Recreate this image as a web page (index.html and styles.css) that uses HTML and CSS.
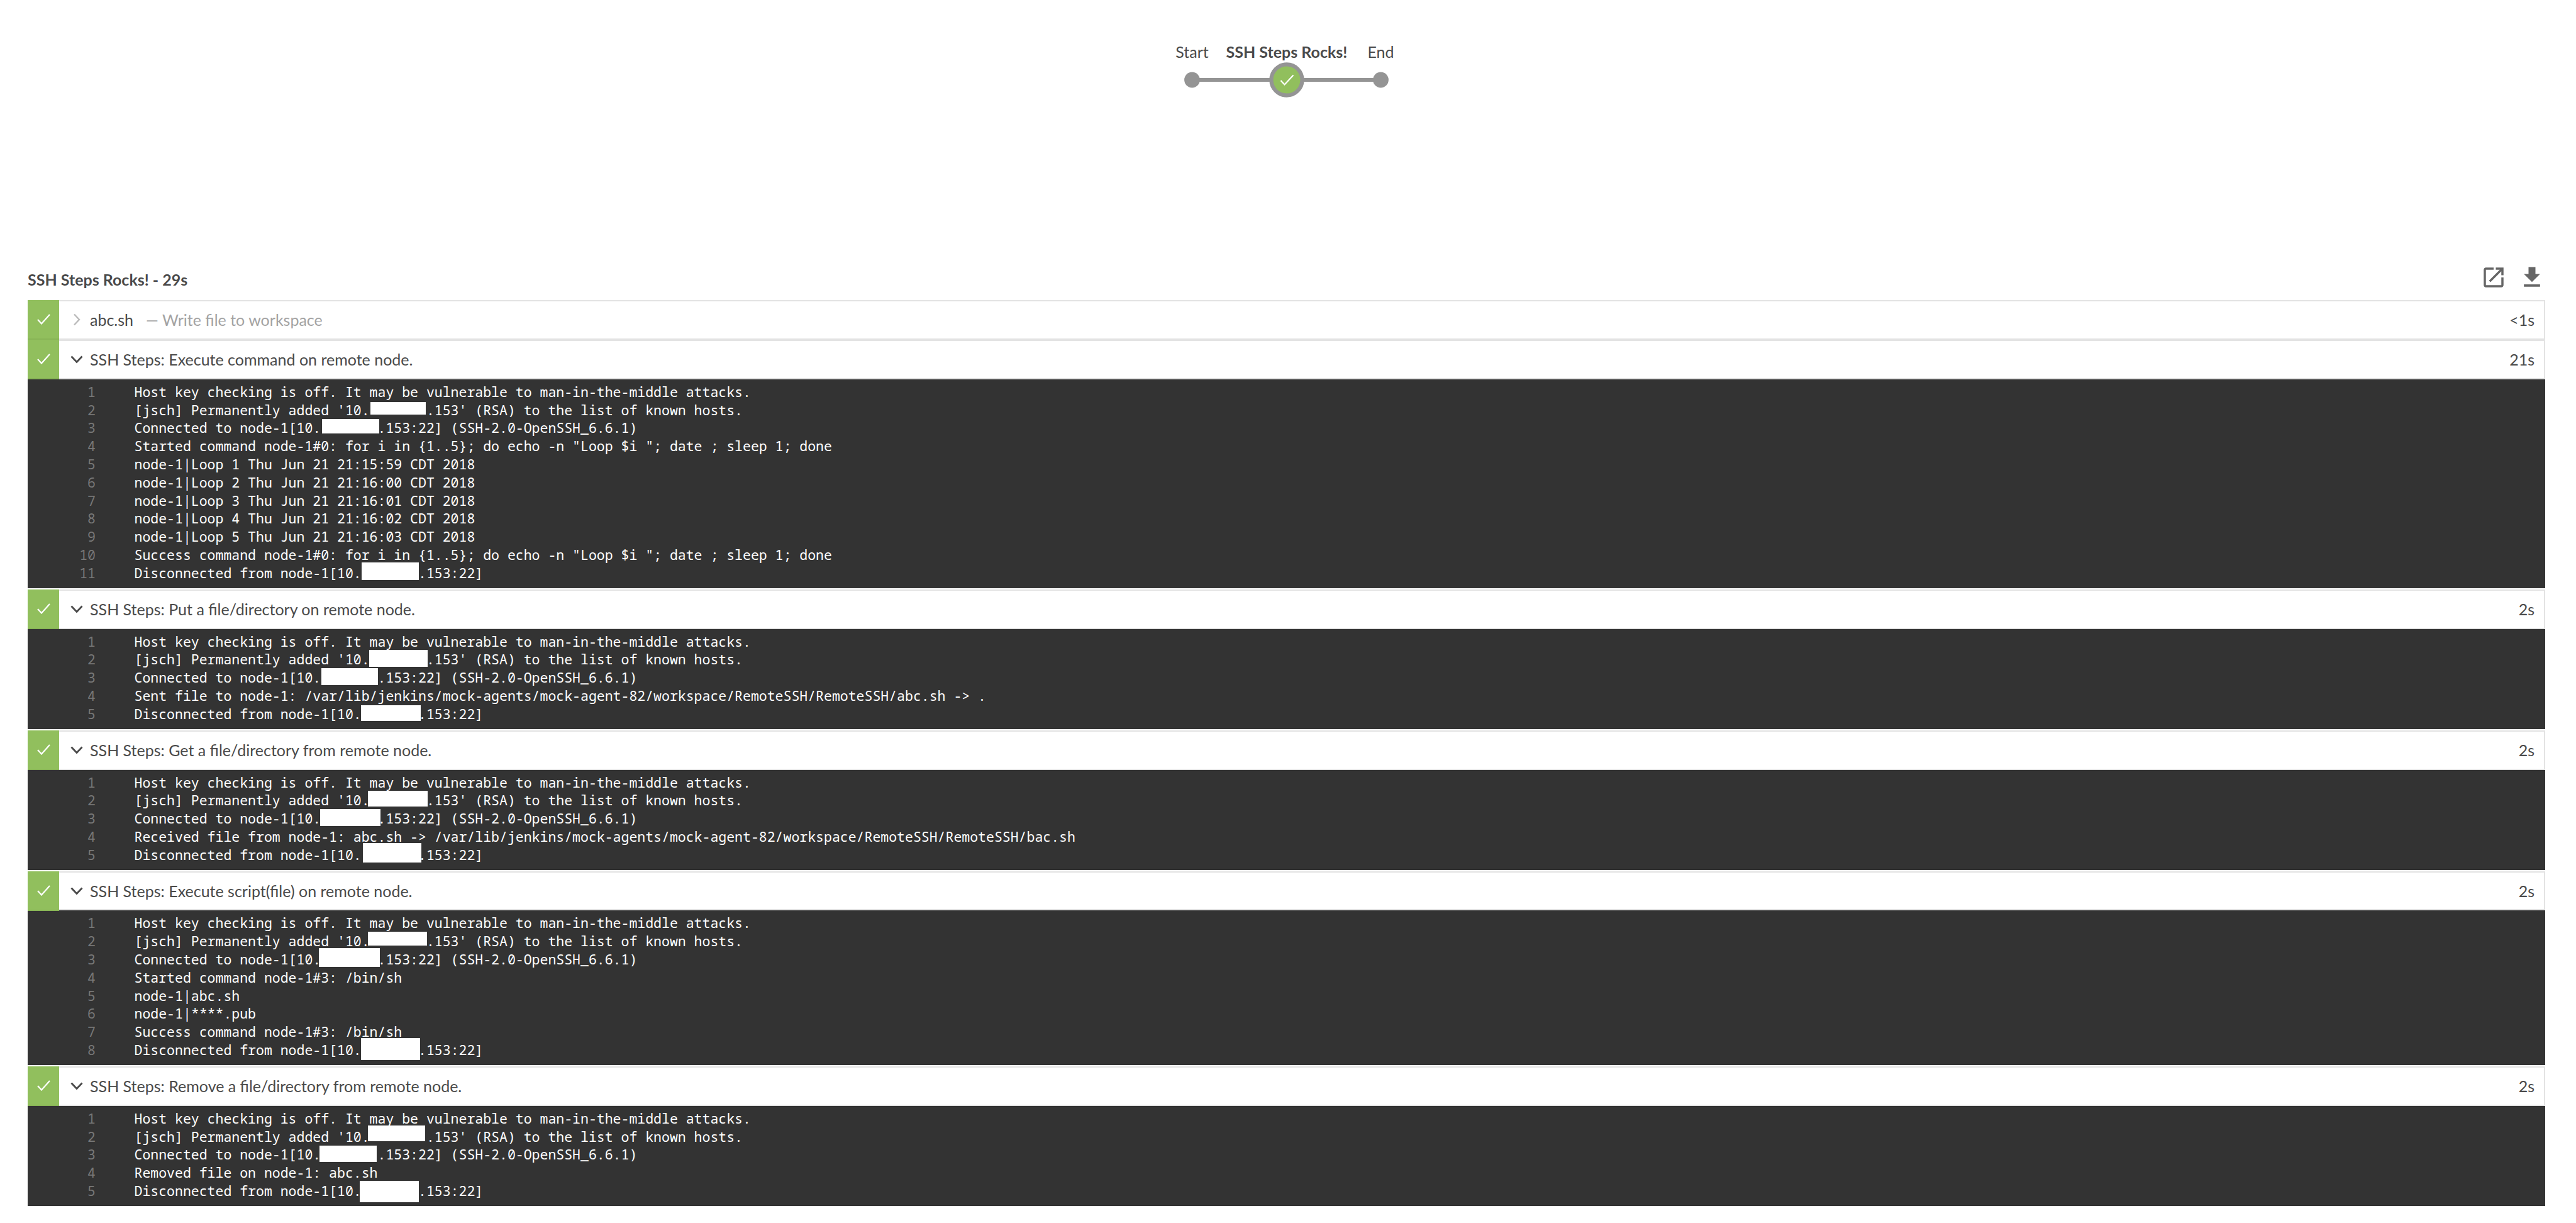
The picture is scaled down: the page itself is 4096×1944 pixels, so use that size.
FILE: index.html
```html
<!DOCTYPE html>
<html lang="en">
<head>
<meta charset="utf-8">
<title>SSH Steps Rocks!</title>
<link rel="stylesheet" href="styles.css">
</head>
<body>
<svg width="0" height="0" class="defs">
  <defs>
    <path id="tick" d="M1 9 L7 15.500 L20 1" fill="none" stroke="#fff" stroke-width="2.200"/>
  </defs>
</svg>
<main class="page">
  <div class="graph">
    <svg class="graph-svg" width="440" height="415" viewBox="0 0 440 415">
      <line x1="69.5" y1="127" x2="369.5" y2="127" stroke="#949494" stroke-width="6"/>
      <circle cx="69.5" cy="127" r="12.4" fill="#949494"/>
      <circle cx="369.5" cy="127" r="12.4" fill="#949494"/>
      <circle cx="220" cy="127" r="24.6" fill="#91bf5d" stroke="#949494" stroke-width="6.2"/>
      <path d="M210.500 128 L216.500 134.500 L230.500 119.500" fill="none" stroke="#fff" stroke-width="2.200"/>
      <text class="g-label" x="69.500" y="92" text-anchor="middle">Start</text>
      <text class="g-label g-bold" x="220" y="92" text-anchor="middle">SSH Steps Rocks!</text>
      <text class="g-label" x="369.500" y="92" text-anchor="middle">End</text>
    </svg>
  </div>

  <header class="head">
    <h1 class="title">SSH Steps Rocks! - 29s</h1>
    <div class="tools">
      <svg class="tool" viewBox="0 0 24 24" width="42" height="42"><path fill="#666" d="M19 19H5V5h7V3H5c-1.110 0-2 .9-2 2v14c0 1.100.89 2 2 2h14c1.100 0 2-.9 2-2v-7h-2v7zM14 3v2h3.590l-9.830 9.830 1.410 1.410L19 6.410V10h2V3h-7z"/></svg>
      <svg class="tool" viewBox="0 0 24 24" width="44" height="44"><path fill="#666" d="M19 9h-4V3H9v6H5l7 7 7-7zM5 18v2h14v-2H5z"/></svg>
    </div>
  </header>

  <div class="steps">
    <section class="step step-joined">
      <div class="row">
        <span class="status"><svg width="21" height="17" viewBox="0 0 21 17"><use href="#tick"/></svg></span>
        <svg class="chev" width="24" height="24" viewBox="0 0 24 24"><path d="M8 3.500 L16 12 L8 20.500" fill="none" stroke="#bbb" stroke-width="2.400"/></svg>
        <span class="name">abc.sh</span>
        <span class="desc">— Write file to workspace</span>
        <span class="time">&lt;1s</span>
      </div>
    </section>

    <section class="step">
      <div class="row">
        <span class="status"><svg width="21" height="17" viewBox="0 0 21 17"><use href="#tick"/></svg></span>
        <svg class="chev" width="24" height="24" viewBox="0 0 24 24"><path d="M3.500 7.500 L12 16.500 L20.500 7.500" fill="none" stroke="#4a4a4a" stroke-width="2.800"/></svg>
        <span class="name">SSH Steps: Execute command on remote node.</span>
        <span class="time">21s</span>
      </div>
      <div class="log">
        <div class="line"><span class="num">1</span><span class="txt">Host key checking is off. It may be vulnerable to man-in-the-middle attacks.</span></div>
        <div class="line"><span class="num">2</span><span class="txt">[jsch] Permanently added '10.<span class="redact rd-a1"></span>.153' (RSA) to the list of known hosts.</span></div>
        <div class="line"><span class="num">3</span><span class="txt">Connected to node-1[10.<span class="redact rd-a2"></span>.153:22] (SSH-2.0-OpenSSH_6.6.1)</span></div>
        <div class="line"><span class="num">4</span><span class="txt">Started command node-1#0: for i in {1..5}; do echo -n "Loop $i "; date ; sleep 1; done</span></div>
        <div class="line"><span class="num">5</span><span class="txt">node-1|Loop 1 Thu Jun 21 21:15:59 CDT 2018</span></div>
        <div class="line"><span class="num">6</span><span class="txt">node-1|Loop 2 Thu Jun 21 21:16:00 CDT 2018</span></div>
        <div class="line"><span class="num">7</span><span class="txt">node-1|Loop 3 Thu Jun 21 21:16:01 CDT 2018</span></div>
        <div class="line"><span class="num">8</span><span class="txt">node-1|Loop 4 Thu Jun 21 21:16:02 CDT 2018</span></div>
        <div class="line"><span class="num">9</span><span class="txt">node-1|Loop 5 Thu Jun 21 21:16:03 CDT 2018</span></div>
        <div class="line"><span class="num">10</span><span class="txt">Success command node-1#0: for i in {1..5}; do echo -n "Loop $i "; date ; sleep 1; done</span></div>
        <div class="line"><span class="num">11</span><span class="txt">Disconnected from node-1[10.<span class="redact rd-a3"></span>.153:22]</span></div>
      </div>
    </section>

    <section class="step">
      <div class="row">
        <span class="status"><svg width="21" height="17" viewBox="0 0 21 17"><use href="#tick"/></svg></span>
        <svg class="chev" width="24" height="24" viewBox="0 0 24 24"><path d="M3.500 7.500 L12 16.500 L20.500 7.500" fill="none" stroke="#4a4a4a" stroke-width="2.800"/></svg>
        <span class="name">SSH Steps: Put a file/directory on remote node.</span>
        <span class="time">2s</span>
      </div>
      <div class="log">
        <div class="line"><span class="num">1</span><span class="txt">Host key checking is off. It may be vulnerable to man-in-the-middle attacks.</span></div>
        <div class="line"><span class="num">2</span><span class="txt">[jsch] Permanently added '10.<span class="redact rd-b1"></span>.153' (RSA) to the list of known hosts.</span></div>
        <div class="line"><span class="num">3</span><span class="txt">Connected to node-1[10.<span class="redact rd-b2"></span>.153:22] (SSH-2.0-OpenSSH_6.6.1)</span></div>
        <div class="line"><span class="num">4</span><span class="txt">Sent file to node-1: /var/lib/jenkins/mock-agents/mock-agent-82/workspace/RemoteSSH/RemoteSSH/abc.sh -&gt; .</span></div>
        <div class="line"><span class="num">5</span><span class="txt">Disconnected from node-1[10.<span class="redact rd-b3"></span>.153:22]</span></div>
      </div>
    </section>

    <section class="step">
      <div class="row">
        <span class="status"><svg width="21" height="17" viewBox="0 0 21 17"><use href="#tick"/></svg></span>
        <svg class="chev" width="24" height="24" viewBox="0 0 24 24"><path d="M3.500 7.500 L12 16.500 L20.500 7.500" fill="none" stroke="#4a4a4a" stroke-width="2.800"/></svg>
        <span class="name">SSH Steps: Get a file/directory from remote node.</span>
        <span class="time">2s</span>
      </div>
      <div class="log">
        <div class="line"><span class="num">1</span><span class="txt">Host key checking is off. It may be vulnerable to man-in-the-middle attacks.</span></div>
        <div class="line"><span class="num">2</span><span class="txt">[jsch] Permanently added '10.<span class="redact rd-c1"></span>.153' (RSA) to the list of known hosts.</span></div>
        <div class="line"><span class="num">3</span><span class="txt">Connected to node-1[10.<span class="redact rd-c2"></span>.153:22] (SSH-2.0-OpenSSH_6.6.1)</span></div>
        <div class="line"><span class="num">4</span><span class="txt">Received file from node-1: abc.sh -&gt; /var/lib/jenkins/mock-agents/mock-agent-82/workspace/RemoteSSH/RemoteSSH/bac.sh</span></div>
        <div class="line"><span class="num">5</span><span class="txt">Disconnected from node-1[10.<span class="redact rd-c3"></span>.153:22]</span></div>
      </div>
    </section>

    <section class="step">
      <div class="row">
        <span class="status"><svg width="21" height="17" viewBox="0 0 21 17"><use href="#tick"/></svg></span>
        <svg class="chev" width="24" height="24" viewBox="0 0 24 24"><path d="M3.500 7.500 L12 16.500 L20.500 7.500" fill="none" stroke="#4a4a4a" stroke-width="2.800"/></svg>
        <span class="name">SSH Steps: Execute script(file) on remote node.</span>
        <span class="time">2s</span>
      </div>
      <div class="log">
        <div class="line"><span class="num">1</span><span class="txt">Host key checking is off. It may be vulnerable to man-in-the-middle attacks.</span></div>
        <div class="line"><span class="num">2</span><span class="txt">[jsch] Permanently added '10.<span class="redact rd-d1"></span>.153' (RSA) to the list of known hosts.</span></div>
        <div class="line"><span class="num">3</span><span class="txt">Connected to node-1[10.<span class="redact rd-d2"></span>.153:22] (SSH-2.0-OpenSSH_6.6.1)</span></div>
        <div class="line"><span class="num">4</span><span class="txt">Started command node-1#3: /bin/sh</span></div>
        <div class="line"><span class="num">5</span><span class="txt">node-1|abc.sh</span></div>
        <div class="line"><span class="num">6</span><span class="txt">node-1|****.pub</span></div>
        <div class="line"><span class="num">7</span><span class="txt">Success command node-1#3: /bin/sh</span></div>
        <div class="line"><span class="num">8</span><span class="txt">Disconnected from node-1[10.<span class="redact rd-d3"></span>.153:22]</span></div>
      </div>
    </section>

    <section class="step">
      <div class="row">
        <span class="status"><svg width="21" height="17" viewBox="0 0 21 17"><use href="#tick"/></svg></span>
        <svg class="chev" width="24" height="24" viewBox="0 0 24 24"><path d="M3.500 7.500 L12 16.500 L20.500 7.500" fill="none" stroke="#4a4a4a" stroke-width="2.800"/></svg>
        <span class="name">SSH Steps: Remove a file/directory from remote node.</span>
        <span class="time">2s</span>
      </div>
      <div class="log">
        <div class="line"><span class="num">1</span><span class="txt">Host key checking is off. It may be vulnerable to man-in-the-middle attacks.</span></div>
        <div class="line"><span class="num">2</span><span class="txt">[jsch] Permanently added '10.<span class="redact rd-e1"></span>.153' (RSA) to the list of known hosts.</span></div>
        <div class="line"><span class="num">3</span><span class="txt">Connected to node-1[10.<span class="redact rd-e2"></span>.153:22] (SSH-2.0-OpenSSH_6.6.1)</span></div>
        <div class="line"><span class="num">4</span><span class="txt">Removed file on node-1: abc.sh</span></div>
        <div class="line"><span class="num">5</span><span class="txt">Disconnected from node-1[10.<span class="redact rd-e3"></span>.153:22]</span></div>
      </div>
    </section>
  </div>
</main>
</body>
</html>
```
FILE: styles.css
```css
* { box-sizing: border-box; }
html, body { margin: 0; padding: 0; background: #fff; }
body { font-family: Lato, "Open Sans", sans-serif; color: #4a4a4a; }
.defs { position: absolute; }
.page { padding: 0 49px 0 44px; height: 1944px; overflow: hidden; }

.graph { display: flex; justify-content: center; height: 415px; }
.graph-svg { display: block; }
.g-label { font-family: Lato, sans-serif; font-size: 25px; fill: #4a4a4a; }
.g-bold { font-weight: 700; }

.head { display: flex; align-items: center; justify-content: space-between; height: 62px; }
.title { margin: 0 0 3px; font-size: 25px; font-weight: 700; color: #4a4a4a; line-height: 59px; }
.tools { display: flex; align-items: center; gap: 18px; margin-right: -1px; margin-bottom: 11px; }
.tool { display: block; }

.steps { display: flex; flex-direction: column; gap: 1.600px; }
.step-joined { margin-bottom: -1.600px; }
.row {
  display: flex; align-items: center; height: 62.900px;
  border: solid #e3e3e3; border-width: 2px 2px 2.500px 0;
  background: #fff;
}
.status {
  display: flex; align-items: center; justify-content: center;
  width: 50px; align-self: stretch; margin: -2px 0 -2.500px;
  background: #91bf5d;
  border-bottom: 2px solid #88b556;
}
.chev { display: block; margin: 0 9px 0 16px; flex: none; }
.name { font-size: 25px; color: #4a4a4a; white-space: nowrap; }
.desc { font-size: 25px; color: #a3a3a3; margin-left: 20px; white-space: nowrap; }
.time { margin-left: auto; margin-right: 15px; font-size: 25px; color: #4a4a4a; }

.log { background: #333; padding: 6px 0 9.500px; font-family: "Noto Sans Mono", "DejaVu Sans Mono", monospace; font-size: 21.500px; }
.line { display: flex; height: 28.800px; line-height: 28.800px; white-space: pre; }
.num { width: 108px; text-align: right; color: #777; flex: none; }
.txt { margin-left: 61.500px; color: #fff; }

.redact { display: inline-block; vertical-align: top; background: #fff; margin-bottom: -20px; }
.rd-a1 { width: 88.400px; height: 20.300px; margin-top: 1.600px; margin-left: 1.050px; margin-right: .85px; }
.rd-a2 { width: 90.800px; height: 22.700px; margin-top: 0; margin-left: 1.600px; margin-right: -2.100px; }
.rd-a3 { width: 90.800px; height: 27.600px; margin-top: -2.800px; margin-left: .15px; margin-right: -.65px; }
.rd-b1 { width: 93.300px; height: 27.600px; margin-top: -1.600px; margin-left: -.55px; margin-right: -2.450px; }
.rd-b2 { width: 90px; height: 26.800px; margin-top: -1px; margin-left: .8px; margin-right: -.5px; }
.rd-b3 { width: 94.900px; height: 25px; margin-top: 0; margin-left: -.65px; margin-right: -3.950px; }
.rd-c1 { width: 94.900px; height: 25.100px; margin-top: -1.600px; margin-left: -3px; margin-right: -1.600px; }
.rd-c2 { width: 96.500px; height: 27.600px; margin-top: -1.600px; margin-left: -1.600px; margin-right: -4.600px; }
.rd-c3 { width: 93.300px; height: 31.600px; margin-top: -4.900px; margin-left: 1.800px; margin-right: -4.800px; }
.rd-d1 { width: 94px; height: 21.900px; margin-top: -.8px; margin-left: -2.200px; margin-right: -1.500px; }
.rd-d2 { width: 96.500px; height: 29.200px; margin-top: -3.600px; margin-left: -3.200px; margin-right: -3px; }
.rd-d3 { width: 94px; height: 34.900px; margin-top: -4.900px; margin-left: -.65px; margin-right: -3px; }
.rd-e1 { width: 90.800px; height: 24.300px; margin-top: -3.200px; margin-left: -2.200px; margin-right: 1.700px; }
.rd-e2 { width: 90.800px; height: 25.100px; margin-top: 0; margin-left: -2.400px; margin-right: 1.900px; }
.rd-e3 { width: 94px; height: 33.100px; margin-top: -1.600px; margin-left: -2.300px; margin-right: -1.400px; }
```
